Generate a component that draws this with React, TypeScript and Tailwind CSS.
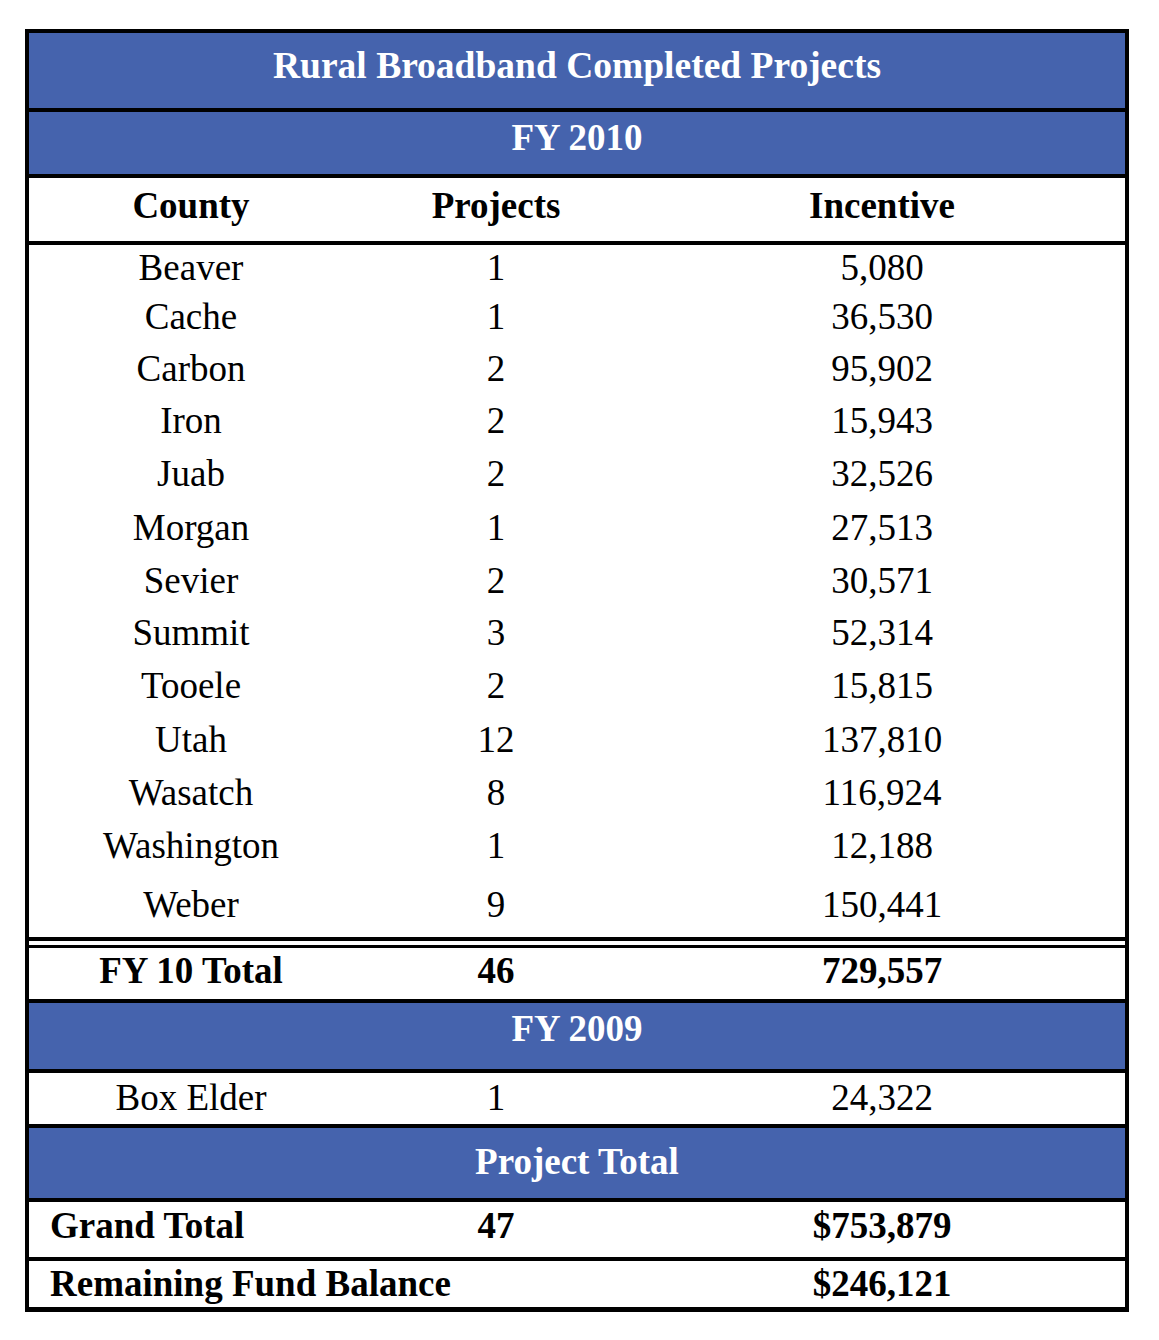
const rows: [string, string, string, number][] = [
  ['Beaver', '1', '5,080', 47],
  ['Cache', '1', '36,530', 52],
  ['Carbon', '2', '95,902', 52],
  ['Iron', '2', '15,943', 52],
  ['Juab', '2', '32,526', 54],
  ['Morgan', '1', '27,513', 54],
  ['Sevier', '2', '30,571', 52],
  ['Summit', '3', '52,314', 52],
  ['Tooele', '2', '15,815', 54],
  ['Utah', '12', '137,810', 54],
  ['Wasatch', '8', '116,924', 52],
  ['Washington', '1', '12,188', 54],
  ['Weber', '9', '150,441', 63],
]

const cols = 'grid grid-cols-[324px_286px_1fr]'

function Cell({ children, className = '' }: { children?: React.ReactNode; className?: string }) {
  return <div className={`flex items-center justify-center ${className}`}>{children}</div>
}

export default function App() {
  return (
    <div className="min-h-[1340px] w-[1159px] bg-white pt-[29px] pl-[25px] font-['Liberation_Serif',serif] text-[37px] leading-none text-black">
      <div className="w-[1104px] border-4 border-b-[5px] border-black">
        <div className="flex h-[79px] items-center justify-center border-b-4 border-black bg-[#4563ad] pb-[10px] text-[37.5px] font-bold text-white">
          Rural Broadband Completed Projects
        </div>
        <div className="flex h-[66px] items-center justify-center border-b-4 border-black bg-[#4563ad] pb-[12px] font-bold text-white">
          FY 2010
        </div>
        <div className={`${cols} h-[67px] border-b-4 border-black pb-[9px] font-bold`}>
          <Cell>County</Cell>
          <Cell>Projects</Cell>
          <Cell>Incentive</Cell>
        </div>
        {rows.map(([county, projects, incentive, h]) => (
          <div key={county} className={`${cols} pb-[3px]`} style={{ height: h }}>
            <Cell>{county}</Cell>
            <Cell>{projects}</Cell>
            <Cell>{incentive}</Cell>
          </div>
        ))}
        <div className="h-[4px] bg-black" />
        <div className="h-[4px] bg-white" />
        <div className="h-[3px] bg-black" />
        <div className={`${cols} h-[55px] border-b-4 border-black pb-[7px] font-bold`}>
          <Cell>FY 10 Total</Cell>
          <Cell>46</Cell>
          <Cell>729,557</Cell>
        </div>
        <div className="flex h-[70px] items-center justify-center border-b-4 border-black bg-[#4563ad] pb-[15px] font-bold text-white">
          FY 2009
        </div>
        <div className={`${cols} h-[55px] border-b-4 border-black pb-[2px]`}>
          <Cell>Box Elder</Cell>
          <Cell>1</Cell>
          <Cell>24,322</Cell>
        </div>
        <div className="flex h-[74px] items-center justify-center border-b-4 border-black bg-[#4563ad] pb-[3px] font-bold text-white">
          Project Total
        </div>
        <div className={`${cols} h-[59px] border-b-4 border-black pb-[9px] font-bold`}>
          <Cell className="!justify-start pl-[21px]">Grand Total</Cell>
          <Cell>47</Cell>
          <Cell>$753,879</Cell>
        </div>
        <div className={`${cols} h-[46px] pb-[2px] font-bold`}>
          <Cell className="col-span-2 !justify-start pl-[21px]">Remaining Fund Balance</Cell>
          <Cell>$246,121</Cell>
        </div>
      </div>
    </div>
  )
}
